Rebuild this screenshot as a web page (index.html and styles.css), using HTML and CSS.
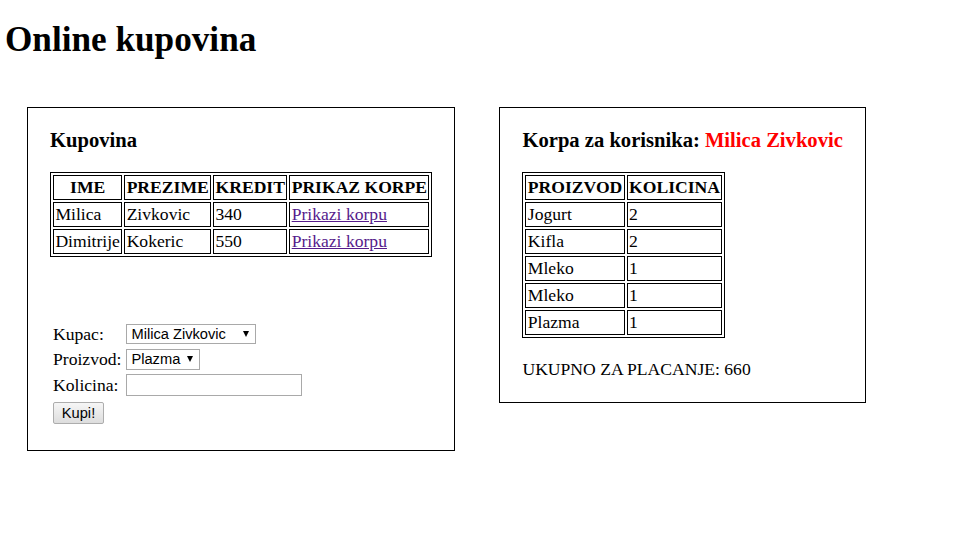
FILE: index.html
```html
<!DOCTYPE html>
<html lang="sr">
<head>
<meta charset="utf-8">
<title>Online kupovina</title>
<link rel="stylesheet" href="styles.css">
</head>
<body>
<h1 class="title">Online kupovina</h1>
<div class="panels">
  <div class="panel panel-left">
    <h3 class="panel-title">Kupovina</h3>
    <table class="grid">
      <tr><th>IME</th><th>PREZIME</th><th>KREDIT</th><th>PRIKAZ KORPE</th></tr>
      <tr><td>Milica</td><td>Zivkovic</td><td>340</td><td><a class="link" href="#">Prikazi korpu</a></td></tr>
      <tr><td>Dimitrije</td><td>Kokeric</td><td>550</td><td><a class="link" href="#">Prikazi korpu</a></td></tr>
    </table>
    <form class="buy-form">
      <table class="form-table">
        <tr>
          <td class="lbl">Kupac:</td>
          <td><span class="sel-wrap"><select class="sel sel-kupac"><option>Milica Zivkovic</option><option>Dimitrije Kokeric</option></select></span></td>
        </tr>
        <tr>
          <td class="lbl">Proizvod:</td>
          <td><span class="sel-wrap"><select class="sel sel-proizvod"><option>Plazma</option><option>Jogurt</option><option>Kifla</option><option>Mleko</option></select></span></td>
        </tr>
        <tr>
          <td class="lbl">Kolicina:</td>
          <td><input class="txt" type="text"></td>
        </tr>
        <tr>
          <td colspan="2"><button class="btn" type="button">Kupi!</button></td>
        </tr>
      </table>
    </form>
  </div>
  <div class="panel panel-right">
    <h3 class="panel-title">Korpa za korisnika: <span class="user">Milica Zivkovic</span></h3>
    <table class="grid">
      <tr><th>PROIZVOD</th><th>KOLICINA</th></tr>
      <tr><td>Jogurt</td><td>2</td></tr>
      <tr><td>Kifla</td><td>2</td></tr>
      <tr><td>Mleko</td><td>1</td></tr>
      <tr><td>Mleko</td><td>1</td></tr>
      <tr><td>Plazma</td><td>1</td></tr>
    </table>
    <p class="total">UKUPNO ZA PLACANJE: 660</p>
  </div>
</div>
</body>
</html>
```

FILE: styles.css
```css
html, body {
  margin: 0;
  padding: 0;
  background: #fff;
}
body {
  font-family: "Liberation Serif", "Times New Roman", serif;
  font-size: 17.6px;
  color: #000;
}
.title {
  font-size: 35.2px;
  font-weight: bold;
  margin: 19px 0 0 5px;
  line-height: 41px;
}
.panels {
  display: flex;
  align-items: flex-start;
  gap: 44px;
  margin: 47px 0 0 27px;
}
.panel {
  border: 1px solid #000;
  padding: 20px 22px 0 22px;
}
.panel-left { padding-bottom: 23px; }
.panel-right { padding-bottom: 23px; }
.panel-title {
  font-size: 20.6px;
  font-weight: bold;
  margin: 0 0 20px 0;
  line-height: 24px;
}
.user { color: #ff0000; }
.grid {
  border: 1px solid #000;
  border-spacing: 2px;
  border-collapse: separate;
}
.grid th, .grid td {
  border: 1px solid #000;
  padding: 1px 1.375px;
  line-height: 21px;
  text-align: left;
}
.grid th { text-align: center; font-weight: bold; }
.panel-right .grid th { text-align: left; }
.link { color: #551a8b; text-decoration: underline; }
.buy-form { margin-top: 63px; }
.form-table {
  border-spacing: 2px;
  border-collapse: separate;
}
.form-table td {
  padding: 1px;
  line-height: 20px;
}
.form-table .lbl { padding-right: 2px; }
.sel-wrap {
  position: relative;
  display: inline-block;
  vertical-align: baseline;
}
.sel-wrap::after {
  content: "";
  position: absolute;
  right: 7px;
  top: 8px;
  border-left: 3.5px solid transparent;
  border-right: 3.5px solid transparent;
  border-top: 6px solid #000;
  pointer-events: none;
}
.sel {
  appearance: none;
  -webkit-appearance: none;
  font-family: "Liberation Sans", Arial, sans-serif;
  font-size: 14.67px;
  color: #000;
  background: #fff;
  border: 1px solid #a9a9a9;
  border-radius: 0;
  height: 20.5px;
  padding: 0 0 0 4px;
  margin: 0;
  line-height: 18px;
}
.sel-kupac { width: 130px; }
.sel-proizvod { width: 74px; }
.txt {
  font-family: "Liberation Sans", Arial, sans-serif;
  font-size: 14.67px;
  width: 176px;
  height: 22.7px;
  box-sizing: border-box;
  border: 1px solid #a9a9a9;
  padding: 1px 2px;
  margin: 0;
  background: #fff;
}
.btn {
  font-family: "Liberation Sans", Arial, sans-serif;
  font-size: 14.67px;
  color: #000;
  width: 51px;
  height: 22px;
  box-sizing: border-box;
  border: 1px solid #adadad;
  border-radius: 2px;
  background: linear-gradient(#f6f6f6, #dddddd);
  padding: 0;
  margin: 2px 0 0 0;
}
.total {
  margin: 21px 0 0 0;
  line-height: 20px;
}
```
